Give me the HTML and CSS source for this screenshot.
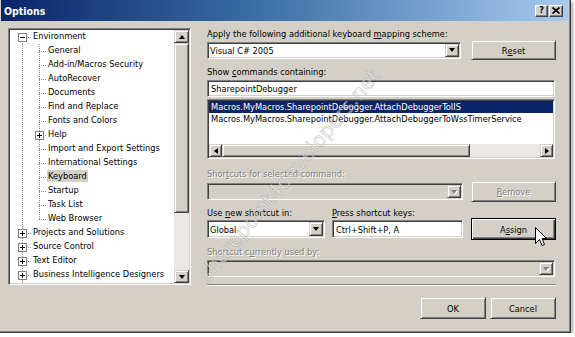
FILE: index.html
```html
<!DOCTYPE html>
<html>
<head>
<meta charset="utf-8">
<link rel="stylesheet" href="styles.css">
</head>
<body>
<div class="window">
  <div class="titlebar">
    <span class="title">Options</span>
    <span class="tbtns">
      <span class="tbtn q">?</span>
      <span class="tbtn"><svg width="8" height="7" viewBox="0 0 8 7"><path d="M0.5 0.5L7.5 6.5M7.5 0.5L0.5 6.5" stroke="#000" stroke-width="1.7"/></svg></span>
    </span>
  </div>
  <div class="body">
    <div class="main">
      <div class="tree sunken">
        <div class="tree-items">
          <div class="tr"><span class="c0 first"><span class="exp minus"></span></span><span class="t">Environment</span></div>
          <div class="tr"><span class="c0 v"></span><span class="c1 tee"></span><span class="t">General</span></div>
          <div class="tr"><span class="c0 v"></span><span class="c1 tee"></span><span class="t">Add-in/Macros Security</span></div>
          <div class="tr"><span class="c0 v"></span><span class="c1 tee"></span><span class="t">AutoRecover</span></div>
          <div class="tr"><span class="c0 v"></span><span class="c1 tee"></span><span class="t">Documents</span></div>
          <div class="tr"><span class="c0 v"></span><span class="c1 tee"></span><span class="t">Find and Replace</span></div>
          <div class="tr"><span class="c0 v"></span><span class="c1 tee"></span><span class="t">Fonts and Colors</span></div>
          <div class="tr"><span class="c0 v"></span><span class="c1 tee"><span class="exp plus sub"></span></span><span class="t">Help</span></div>
          <div class="tr"><span class="c0 v"></span><span class="c1 tee"></span><span class="t">Import and Export Settings</span></div>
          <div class="tr"><span class="c0 v"></span><span class="c1 tee"></span><span class="t">International Settings</span></div>
          <div class="tr"><span class="c0 v"></span><span class="c1 tee"></span><span class="t sel">Keyboard</span></div>
          <div class="tr"><span class="c0 v"></span><span class="c1 tee"></span><span class="t">Startup</span></div>
          <div class="tr"><span class="c0 v"></span><span class="c1 tee"></span><span class="t">Task List</span></div>
          <div class="tr"><span class="c0 v"></span><span class="c1 last"></span><span class="t">Web Browser</span></div>
          <div class="tr"><span class="c0 tee"><span class="exp plus"></span></span><span class="t">Projects and Solutions</span></div>
          <div class="tr"><span class="c0 tee"><span class="exp plus"></span></span><span class="t">Source Control</span></div>
          <div class="tr"><span class="c0 tee"><span class="exp plus"></span></span><span class="t">Text Editor</span></div>
          <div class="tr"><span class="c0 tee"><span class="exp plus"></span></span><span class="t">Business Intelligence Designers</span></div>
          <div class="tr"><span class="c0 tee"><span class="exp plus"></span></span><span class="t">Database Tools</span></div>
        </div>
        <div class="vscroll">
          <span class="sbtn raised"><i class="tri up"></i></span>
          <span class="vthumb raised"></span>
          <span class="vtrack"></span>
          <span class="sbtn raised"><i class="tri down"></i></span>
        </div>
      </div>

      <div class="panel">
        <div class="lbl">Apply the following additional keyboard <u>m</u>apping scheme:</div>
        <div class="row r-top">
          <div class="field combo w254"><span class="val">Visual C# 2005</span><span class="dd raised"><i class="tri down"></i></span></div>
          <div class="btn raised">R<u>e</u>set</div>
        </div>
        <div class="lbl mt6">Show <u>c</u>ommands containing:</div>
        <div class="field text mt2"><span class="val">SharepointDebugger</span></div>
        <div class="field list mt2">
          <div class="items">
            <div class="it sel">Macros.MyMacros.SharepointDebugger.AttachDebuggerToIIS</div>
            <div class="it">Macros.MyMacros.SharepointDebugger.AttachDebuggerToWssTimerService</div>
          </div>
          <div class="hscroll">
            <span class="hbtn raised"><i class="tri left"></i></span>
            <span class="hthumb raised"></span>
            <span class="htrack"></span>
            <span class="hbtn raised"><i class="tri right"></i></span>
          </div>
        </div>
        <div class="lbl dis mt9">Shor<u>t</u>cuts for selected command:</div>
        <div class="row r-sc">
          <div class="field combo off w256"><span class="val"></span><span class="dd raised"><i class="tri down grey"></i></span></div>
          <div class="btn raised disb"><span><u>R</u>emove</span></div>
        </div>
        <div class="row r-lbls">
          <div class="lbl c-use">Use <u>n</u>ew shortcut in:</div>
          <div class="lbl"><u>P</u>ress shortcut keys:</div>
        </div>
        <div class="row r-assign">
          <div class="field combo w118"><span class="val">Global</span><span class="dd raised"><i class="tri down"></i></span></div>
          <div class="field text w131"><span class="val">Ctrl+Shift+P, A</span></div>
          <div class="btn default">A<u>s</u>sign</div>
        </div>
        <div class="lbl dis mt6">Shortcut c<u>u</u>rrently used by:</div>
        <div class="field combo off mt2"><span class="val"></span><span class="dd raised"><i class="tri down grey"></i></span></div>
        <div class="sep"></div>
      </div>
    </div>
    <div class="footer">
      <div class="btn raised fbtn">OK</div>
      <div class="btn raised fbtn">Cancel</div>
    </div>
  </div>
  <span class="watermark">sharepoint4developers.net</span>
  <svg class="cursor" width="12" height="19" viewBox="0 0 12 19"><path d="M0.5 0.5V16.5L4.5 12.5L7 18.5L9.5 17.5L7 11.5H11.5Z" fill="#fff" stroke="#000" stroke-width="1" stroke-linejoin="miter"/></svg>
</div>
</body>
</html>
```

FILE: styles.css
```css
* { box-sizing: border-box; }

body {
  margin: 0;
  background: #fff;
  font-family: "DejaVu Sans Condensed", "DejaVu Sans", sans-serif;
  font-stretch: condensed;
  font-size: 9.2px;
  color: #000;
}

u { text-decoration: underline; text-underline-offset: 1px; }

.raised {
  background: #d4d0c8;
  border: 1px solid;
  border-color: #d4d0c8 #404040 #404040 #d4d0c8;
  box-shadow: inset 1px 1px #fff, inset -1px -1px #808080;
}

.sunken {
  border: 1px solid;
  border-color: #808080 #fff #fff #808080;
  box-shadow: inset 1px 1px #404040, inset -1px -1px #d4d0c8;
}

.window {
  position: relative;
  width: 571px;
  height: 333px;
  background: #d4d0c8;
  border-right: 1px solid #404040;
  border-bottom: 1px solid #404040;
  padding: 0 2px 2px 1px;
  box-shadow: inset -1px -1px #808080, 2px 2px 3px rgba(80, 80, 80, 0.45);
  overflow: hidden;
}

/* title bar */
.titlebar {
  height: 21px;
  display: flex;
  align-items: center;
  justify-content: space-between;
  padding: 0 5px 0 3px;
  background: linear-gradient(90deg, #0a246a 0%, #3a6ea5 45%, #a6caf0 100%);
}
.title {
  color: #fff;
  font-weight: bold;
  font-size: 10.5px;
}
.tbtns { display: flex; gap: 1px; }
.tbtn {
  width: 14px;
  height: 12px;
  display: flex;
  align-items: center;
  justify-content: center;
  background: #d4d0c8;
  border: 1px solid;
  border-color: #fff #404040 #404040 #fff;
  box-shadow: inset -1px -1px #808080;
  font-weight: bold;
  font-size: 9px;
  line-height: 1;
}
.tbtn.q { width: 13px; }

/* body */
.body { padding: 7px 0 0 7px; }
.main { display: flex; gap: 16px; align-items: flex-start; }

/* tree */
.tree {
  width: 183px;
  height: 257px;
  display: flex;
  background: #fff;
  padding: 1px;
}
.tree-items { flex: 1; overflow: hidden; }
.tr { display: flex; height: 14px; }
.c0 { width: 22px; height: 14px; flex: none; }
.c1 { width: 14px; height: 14px; flex: none; }

.c0.first {
  background:
    repeating-linear-gradient(to bottom, #8c8c8c 0 1px, transparent 1px 2px) 12px 7px / 1px 7px no-repeat,
    repeating-linear-gradient(to right, #8c8c8c 0 1px, transparent 1px 2px) 12px 7px / 10px 1px no-repeat;
}
.c0.v {
  background: repeating-linear-gradient(to bottom, #8c8c8c 0 1px, transparent 1px 2px) 12px 0 / 1px 100% no-repeat;
}
.c0.tee {
  background:
    repeating-linear-gradient(to bottom, #8c8c8c 0 1px, transparent 1px 2px) 12px 0 / 1px 100% no-repeat,
    repeating-linear-gradient(to right, #8c8c8c 0 1px, transparent 1px 2px) 12px 7px / 10px 1px no-repeat;
}
.c1.tee {
  background:
    repeating-linear-gradient(to bottom, #8c8c8c 0 1px, transparent 1px 2px) 7px 0 / 1px 100% no-repeat,
    repeating-linear-gradient(to right, #8c8c8c 0 1px, transparent 1px 2px) 7px 7px / 7px 1px no-repeat;
}
.c1.last {
  background:
    repeating-linear-gradient(to bottom, #8c8c8c 0 1px, transparent 1px 2px) 7px 0 / 1px 8px no-repeat,
    repeating-linear-gradient(to right, #8c8c8c 0 1px, transparent 1px 2px) 7px 7px / 7px 1px no-repeat;
}

.exp {
  display: block;
  width: 9px;
  height: 9px;
  margin: 3px 0 0 8px;
  border: 1px solid #808080;
}
.exp.minus {
  background: #fff linear-gradient(#000, #000) center / 5px 1px no-repeat;
}
.exp.plus {
  background:
    linear-gradient(#000, #000) center / 5px 1px no-repeat,
    linear-gradient(#000, #000) center / 1px 5px no-repeat,
    #fff;
}
.exp.sub { margin-left: 3px; }

.t {
  height: 12px;
  line-height: 12px;
  margin: 0 0 2px 0;
  padding: 0 1px;
  white-space: nowrap;
}
.c1 + .t { margin-left: 1px; }
.t.sel { background: #d4d0c8; }

/* vertical scrollbar */
.vscroll {
  width: 15px;
  flex: none;
  display: flex;
  flex-direction: column;
  background: #eae8e4;
}
.sbtn {
  height: 13px;
  display: flex;
  align-items: center;
  justify-content: center;
  flex: none;
}
.vthumb { height: 170px; flex: none; }
.vtrack { flex: 1; }

/* triangles */
.tri { display: block; width: 0; height: 0; }
.tri.down {
  width: 1px;
  border-left: 3px solid transparent;
  border-right: 3px solid transparent;
  border-top: 4px solid #000;
}
.tri.up {
  width: 1px;
  border-left: 3px solid transparent;
  border-right: 3px solid transparent;
  border-bottom: 4px solid #000;
}
.tri.left {
  height: 1px;
  border-top: 3px solid transparent;
  border-bottom: 3px solid transparent;
  border-right: 4px solid #000;
}
.tri.right {
  height: 1px;
  border-top: 3px solid transparent;
  border-bottom: 3px solid transparent;
  border-left: 4px solid #000;
}
.tri.grey { border-top-color: #808080; filter: drop-shadow(1px 1px 0 #fff); }

/* right panel */
.panel { width: 349px; }
.lbl { height: 12px; line-height: 12px; white-space: nowrap; }
.lbl.dis { color: #808080; text-shadow: 1px 1px 0 #fff; }
.row { display: flex; align-items: center; }
.mt2 { margin-top: 2px; }
.mt6 { margin-top: 6px; }
.mt9 { margin-top: 9px; }

.r-top { height: 20px; justify-content: space-between; }
.r-sc { height: 21px; margin-top: 1px; justify-content: space-between; }
.r-lbls { margin-top: 5px; }
.c-use { width: 125px; }
.r-assign { height: 22px; margin-top: -1px; }

.field {
  height: 17px;
  display: flex;
  align-items: center;
  background: #fff;
  border: 1px solid;
  border-color: #808080 #fff #fff #808080;
  box-shadow: inset 1px 1px #404040, inset -1px -1px #d4d0c8;
  padding: 1px;
  width: 348px;
}
.field.off { background: #d4d0c8; }
.field .val { flex: 1; padding-left: 1px; white-space: nowrap; overflow: hidden; line-height: 13px; }
.field.text .val { padding-left: 2px; }
.dd {
  width: 14px;
  height: 13px;
  flex: none;
  display: flex;
  align-items: center;
  justify-content: center;
}
.w254 { width: 254px; }
.w256 { width: 256px; }
.w118 { width: 118px; height: 18px; }
.w118 .dd { height: 14px; }
.w131 { width: 131px; height: 18px; margin-left: 7px; }

.btn {
  width: 85px;
  height: 20px;
  display: flex;
  align-items: center;
  justify-content: center;
  white-space: nowrap;
}
.r-sc .btn { height: 21px; }
.disb { color: #808080; text-shadow: 1px 1px 0 #fff; }
.btn.default {
  height: 22px;
  margin-left: 8px;
  background: #d4d0c8;
  border: 1px solid #000;
  box-shadow: inset 1px 1px #fff, inset -1px -1px #404040, inset -2px -2px #808080;
}

/* list */
.list {
  height: 60px;
  flex-direction: column;
  align-items: stretch;
}
.items { flex: 1; }
.it {
  height: 12px;
  line-height: 12px;
  padding-left: 2px;
  white-space: nowrap;
}
.it.sel { background: #0a246a; color: #fff; }
.hscroll {
  height: 13px;
  display: flex;
  background: #eae8e4;
}
.hbtn {
  width: 13px;
  flex: none;
  display: flex;
  align-items: center;
  justify-content: center;
}
.hthumb { width: 248px; flex: none; }
.htrack { flex: 1; }

.sep {
  margin-top: 7px;
  height: 2px;
  border-top: 1px solid #808080;
  border-bottom: 1px solid #fff;
}

/* footer */
.footer {
  width: 548px;
  margin-top: 11px;
  display: flex;
  justify-content: flex-end;
  gap: 4px;
}
.fbtn { width: 66px; height: 22px; }

/* overlays */
.watermark {
  position: absolute;
  left: 114px;
  top: 163px;
  width: 350px;
  height: 24px;
  line-height: 24px;
  text-align: center;
  font-family: "DejaVu Sans", sans-serif;
  font-stretch: normal;
  font-size: 20px;
  color: rgba(255, 255, 255, 0.5);
  -webkit-text-stroke: 0.7px rgba(125, 125, 125, 0.42);
  transform: rotate(-50deg);
  pointer-events: none;
}
.cursor {
  position: absolute;
  left: 535px;
  top: 227px;
}
```
